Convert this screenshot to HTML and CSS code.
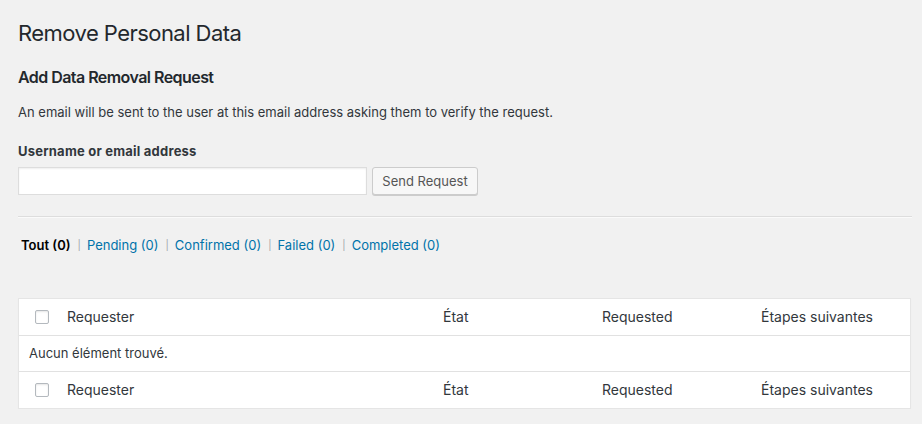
FILE: index.html
```html
<!DOCTYPE html>
<html lang="fr">
<head>
<meta charset="utf-8">
<title>Remove Personal Data</title>
<link rel="stylesheet" href="styles.css">
</head>
<body>
<div class="wrap">
  <h1 class="page-title">Remove Personal Data</h1>
  <h2 class="section-title">Add Data Removal Request</h2>
  <p class="intro">An email will be sent to the user at this email address asking them to verify the request.</p>
  <label class="field-label" for="user">Username or email address</label>
  <div class="field-row">
    <input class="text-input" id="user" type="text">
    <button class="button" type="button">Send Request</button>
  </div>
  <hr class="separator">
  <ul class="subsubsub">
    <li><span class="current">Tout <span class="count">(0)</span></span><span class="sep">|</span></li>
    <li><a href="#">Pending <span class="count">(0)</span></a><span class="sep">|</span></li>
    <li><a href="#">Confirmed <span class="count">(0)</span></a><span class="sep">|</span></li>
    <li><a href="#">Failed <span class="count">(0)</span></a><span class="sep">|</span></li>
    <li><a href="#">Completed <span class="count">(0)</span></a></li>
  </ul>
  <table class="list-table">
    <colgroup>
      <col class="c-check">
      <col class="c-requester">
      <col class="c-state">
      <col class="c-requested">
      <col class="c-next">
    </colgroup>
    <thead>
      <tr>
        <th class="check-col"><span class="checkbox"></span></th>
        <th>Requester</th>
        <th>État</th>
        <th>Requested</th>
        <th>Étapes suivantes</th>
      </tr>
    </thead>
    <tbody>
      <tr class="empty-row">
        <td colspan="5">Aucun élément trouvé.</td>
      </tr>
    </tbody>
    <tfoot>
      <tr>
        <th class="check-col"><span class="checkbox"></span></th>
        <th>Requester</th>
        <th>État</th>
        <th>Requested</th>
        <th>Étapes suivantes</th>
      </tr>
    </tfoot>
  </table>
</div>
</body>
</html>
```
FILE: styles.css
```css
html, body {
  margin: 0;
  padding: 0;
  background: #f1f1f1;
}
body {
  font-family: Inter, "Liberation Sans", Arial, sans-serif;
  font-size: 13px;
  line-height: 20px;
  color: #23282d;
}
.wrap {
  padding: 0 10px 0 18px;
}
.page-title {
  margin: 0;
  padding-top: 18px;
  font-size: 22px;
  font-weight: 400;
  letter-spacing: -0.55px;
  line-height: 30px;
  color: #23282d;
}
.section-title {
  margin: 18px 0 0;
  font-size: 16px;
  font-weight: 600;
  letter-spacing: -0.55px;
  line-height: 22px;
  color: #23282d;
}
.intro {
  margin: 14px 0 0;
  color: #32373c;
}
.field-label {
  display: block;
  margin-top: 19px;
  font-weight: 700;
  letter-spacing: 0.22px;
  color: #32373c;
}
.field-row {
  display: flex;
  gap: 5px;
  margin-top: 6px;
}
.text-input {
  box-sizing: border-box;
  width: 349px;
  height: 28px;
  margin: 0;
  border: 1px solid #ddd;
  background: #fff;
  box-shadow: inset 0 1px 2px rgba(0,0,0,.07);
  font: inherit;
}
.button {
  box-sizing: border-box;
  height: 28px;
  padding: 0 0 1px;
  margin: 0;
  border: 1px solid #ccc;
  border-radius: 3px;
  background: #f7f7f7;
  box-shadow: 0 1px 0 #ccc;
  color: #555;
  font: inherit;
  width: 106px;
}
.separator {
  margin: 21px 0 0;
  height: 0;
  border: 0;
  border-top: 1px solid #ddd;
  border-bottom: 1px solid #fafafa;
}
.subsubsub {
  list-style: none;
  margin: 17px 0 0;
  padding: 0 0 0 3px;
  display: flex;
  align-items: baseline;
  color: #666;
}
.subsubsub li {
  display: flex;
  align-items: center;
}
.subsubsub a {
  color: #0073aa;
  text-decoration: none;
}
.subsubsub .current {
  color: #000;
  font-weight: 600;
}
.subsubsub .sep {
  color: #a0a5aa;
  font-size: 10px;
  line-height: 20px;
  padding: 0 6px 0 7px;
}
.list-table {
  margin-top: 43px;
  width: 893px;
  table-layout: fixed;
  border-collapse: separate;
  border-spacing: 0;
  background: #fff;
  border: 1px solid #e5e5e5;
  box-shadow: 0 1px 1px rgba(0,0,0,.04);
}
.c-check { width: 38px; }
.c-requester { width: 376px; }
.c-state { width: 159px; }
.c-requested { width: 159px; }
.c-next { width: 159px; }
.list-table th,
.list-table td {
  padding: 8px 10px;
  text-align: left;
  font-weight: 400;
  font-size: 14px;
  line-height: 20px;
  color: #32373c;
}
.list-table thead th {
  border-bottom: 1px solid #e1e1e1;
}
.list-table tfoot th {
  border-top: 1px solid #e1e1e1;
}
.list-table td {
  font-size: 13px;
  line-height: 19px;
}
.list-table .check-col {
  padding: 0 0 0 16px;
  vertical-align: middle;
}
.checkbox {
  display: block;
  box-sizing: border-box;
  width: 14px;
  height: 14px;
  border: 1px solid #b4b9be;
  border-radius: 2px;
  background: #fff;
  box-shadow: inset 0 1px 2px rgba(0,0,0,.1);
}
```
